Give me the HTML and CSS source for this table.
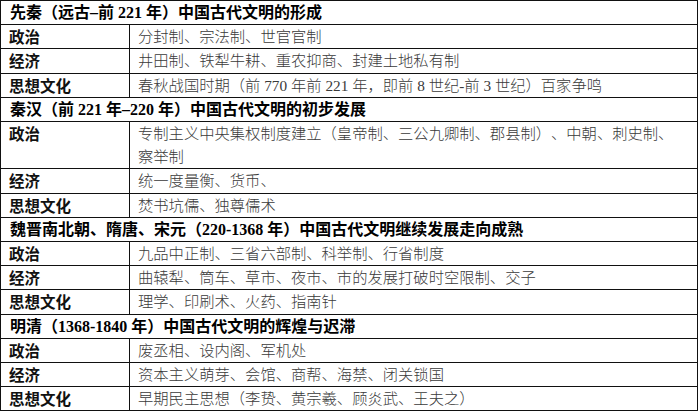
FILE: index.html
```html
<!DOCTYPE html>
<html lang="zh-CN">
<head>
<meta charset="utf-8">
<title>中国古代文明</title>
<link rel="stylesheet" href="styles.css">
</head>
<body>
<table class="history">
  <colgroup><col class="c-label"><col class="c-content"></colgroup>
  <tbody>
    <tr class="era"><td colspan="2">先秦（远古–前 221 年）中国古代文明的形成</td></tr>
    <tr><th>政治</th><td>分封制、宗法制、世官官制</td></tr>
    <tr><th>经济</th><td>井田制、铁犁牛耕、重农抑商、封建土地私有制</td></tr>
    <tr><th>思想文化</th><td>春秋战国时期（前 770 年前 221 年，即前 8 世纪-前 3 世纪）百家争鸣</td></tr>

    <tr class="era"><td colspan="2">秦汉（前 221 年–220 年）中国古代文明的初步发展</td></tr>
    <tr><th>政治</th><td>专制主义中央集权制度建立（皇帝制、三公九卿制、郡县制）、中朝、刺史制、察举制</td></tr>
    <tr><th>经济</th><td>统一度量衡、货币、</td></tr>
    <tr><th>思想文化</th><td>焚书坑儒、独尊儒术</td></tr>

    <tr class="era"><td colspan="2">魏晋南北朝、隋唐、宋元（220-1368 年）中国古代文明继续发展走向成熟</td></tr>
    <tr><th>政治</th><td>九品中正制、三省六部制、科举制、行省制度</td></tr>
    <tr><th>经济</th><td>曲辕犁、筒车、草市、夜市、市的发展打破时空限制、交子</td></tr>
    <tr><th>思想文化</th><td>理学、印刷术、火药、指南针</td></tr>

    <tr class="era"><td colspan="2">明清（1368-1840 年）中国古代文明的辉煌与迟滞</td></tr>
    <tr><th>政治</th><td>废丞相、设内阁、军机处</td></tr>
    <tr><th>经济</th><td>资本主义萌芽、会馆、商帮、海禁、闭关锁国</td></tr>
    <tr><th>思想文化</th><td>早期民主思想（李贽、黄宗羲、顾炎武、王夫之）</td></tr>
  </tbody>
</table>
</body>
</html>
```

FILE: styles.css
```css
html, body {
  margin: 0;
  padding: 0;
  background: #ffffff;
}

.history {
  border-collapse: collapse;
  width: 698px;
  table-layout: fixed;
  font-family: "Liberation Serif", "Noto Sans CJK SC", serif;
  color: #000;
  text-spacing-trim: space-all;
}

.c-label { width: 129px; }

.history td,
.history th {
  border: 1px solid #111;
  padding: 0 12px 0 8px;
  line-height: 23.2px;
  vertical-align: top;
  text-align: left;
}

.history th {
  font-family: "Noto Sans CJK SC", sans-serif;
  font-weight: 700;
  font-size: 15.5px;
  color: #111;
}

.history tr td:last-child {
  font-size: 15.3px;
  font-weight: 300;
  color: #3a3a3a;
}

.history tr.era td {
  font-family: "Liberation Serif", "Noto Sans CJK SC", serif;
  font-weight: 700;
  font-size: 16px;
  color: #000;
  padding-left: 9px;
}
```
